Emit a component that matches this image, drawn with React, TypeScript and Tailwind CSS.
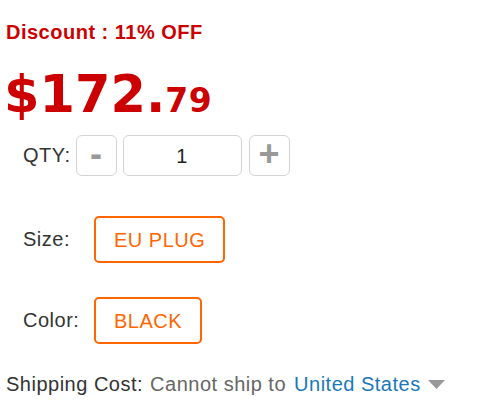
import React from "react";

export default function App() {
  const sans = { fontFamily: '"Liberation Sans", Arial, sans-serif' };
  return (
    <div className="w-[483px] h-[415px] bg-white pt-[21px] pl-[6px] tracking-[0.5px]" style={sans}>
      <div className="text-[20px] leading-[23px] font-bold text-[#cc0000]">Discount : 11% OFF</div>

      <div
        className="mt-[22px] -ml-[2px] flex items-baseline text-[#cc0000] font-bold leading-[58px] h-[58px] tracking-normal"
        style={{ fontFamily: '"DejaVu Sans", Verdana, sans-serif' }}
      >
        <span className="text-[51px]">$172.</span>
        <span className="text-[33px] tracking-[0.5px]">79</span>
      </div>

      <div className="mt-[11px] flex items-center pl-[17px]">
        <span className="text-[20px] leading-[23px] text-[#333]">QTY:</span>
        <button className="ml-[5px] w-[41px] h-[41px] border border-[#d4d4d4] rounded-[6px] bg-white flex items-center justify-center text-[36px] font-bold text-[#999] leading-none pb-[3px] tracking-normal">
          -
        </button>
        <div className="ml-[6px] w-[119px] h-[41px] border border-[#d4d4d4] rounded-[6px] flex items-center justify-center text-[20px] text-[#222]">
          1
        </div>
        <button className="ml-[7px] w-[41px] h-[41px] border border-[#d4d4d4] rounded-[6px] bg-white flex items-center justify-center text-[36px] font-bold text-[#999] leading-none pb-[3px] tracking-normal">
          +
        </button>
      </div>

      <div className="mt-[40px] flex items-center pl-[17px]">
        <span className="w-[71px] text-[20px] leading-[23px] text-[#333]">Size:</span>
        <div className="h-[47px] px-[18px] border-2 border-[#ff6600] rounded-[5px] flex items-center text-[20px] text-[#ff6600]">
          EU PLUG
        </div>
      </div>

      <div className="mt-[34px] flex items-center pl-[17px]">
        <span className="w-[71px] text-[20px] leading-[23px] text-[#333]">Color:</span>
        <div className="h-[47px] px-[18px] border-2 border-[#ff6600] rounded-[5px] flex items-center text-[20px] text-[#ff6600]">
          BLACK
        </div>
      </div>

      <div className="mt-[29px] flex items-center text-[20px] leading-[23px]">
        <span className="text-[#333]">Shipping Cost:</span>
        <span className="ml-[7px] text-[#666]">Cannot ship to</span>
        <span className="ml-[8px] text-[#1a78b8]">United States</span>
        <svg className="ml-[7px]" width="17" height="9" viewBox="0 0 17 9">
          <polygon points="0,0 17,0 8.5,9" fill="#999" />
        </svg>
      </div>
    </div>
  );
}
